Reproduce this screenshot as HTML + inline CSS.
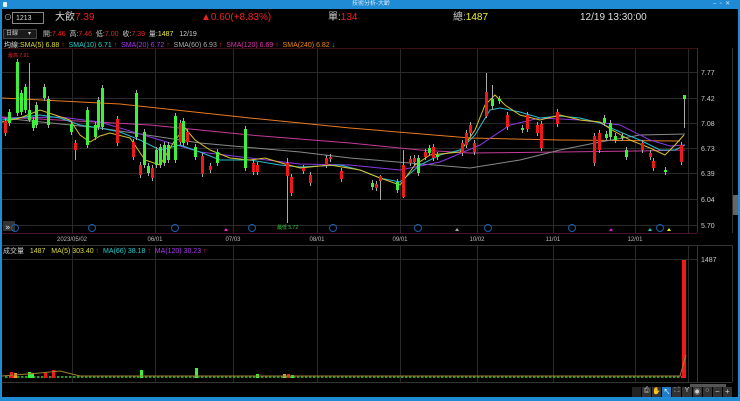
<!DOCTYPE html>
<html><head><meta charset="utf-8">
<style>
*{margin:0;padding:0;box-sizing:border-box}
body{width:740px;height:401px;background:#000;overflow:hidden;position:relative;font-family:"Liberation Sans","Noto Sans CJK TC",sans-serif;color:#ddd}
.t{position:absolute;white-space:nowrap;line-height:1}
</style></head><body>
<div style="position:absolute;left:0;top:0;width:740px;height:9px;background:#1f8bd4"></div>
<div class="t" style="left:352px;top:1px;font-size:6px;color:#cfe6f7">技術分析-大齡</div>
<div style="position:absolute;left:3px;top:2px;width:4px;height:5px;background:#e8f2fa;border-radius:1px"></div>
<div class="t" style="left:713px;top:1px;font-size:6px;color:#cfe6f7">–&nbsp;&nbsp;▫&nbsp;&nbsp;✕</div>
<div style="position:absolute;left:0;top:9px;width:2px;height:392px;background:#1f8bd4"></div>
<div style="position:absolute;left:0;top:397px;width:740px;height:4px;background:#1f8bd4"></div>
<div style="position:absolute;left:738px;top:9px;width:2px;height:392px;background:#1f8bd4"></div>

<div class="t" style="left:4px;top:14px;font-size:8px;color:#bbb">⊙</div>
<div style="position:absolute;left:12px;top:12px;width:32px;height:12px;border:1px solid #888"></div>
<div class="t" style="left:16px;top:15px;font-size:7px;color:#ddd">1213</div>
<div class="t" style="left:55px;top:13px;font-size:10px;color:#ddd">大飲</div>
<div class="t" style="left:75px;top:13px;font-size:10px;color:#e22">7.39</div>
<div class="t" style="left:201px;top:13px;font-size:10px;color:#e22">▲0.60(+8.83%)</div>
<div class="t" style="left:328px;top:13px;font-size:10px;color:#ccc">單:<span style="color:#e22">134</span></div>
<div class="t" style="left:453px;top:13px;font-size:10px;color:#ccc">總:<span style="color:#ee3">1487</span></div>
<div class="t" style="left:580px;top:13px;font-size:10px;color:#ddd">12/19 13:30:00</div>

<div style="position:absolute;left:3px;top:29px;width:34px;height:10px;background:#1a1a1a;border:1px solid #444"></div>
<div class="t" style="left:6px;top:31px;font-size:6px;color:#ccc">日線&nbsp;&nbsp;&nbsp;&nbsp;&nbsp;&nbsp;▾</div>
<div class="t" style="left:43px;top:31px;font-size:7px;color:#ccc">開:<span style="color:#e22">7.46</span>&nbsp; 高:<span style="color:#e22">7.46</span>&nbsp; 低:<span style="color:#e22">7.00</span>&nbsp; 收:<span style="color:#e22">7.39</span>&nbsp; 量:<span style="color:#ee3">1487</span>&nbsp;&nbsp; 12/19</div>
<div class="t" style="left:4px;top:42px;font-size:7px;color:#ddd">均線:<span style="color:#dd3">SMA(5) 6.88</span> <span style="color:#e22">↑</span>&nbsp; <span style="color:#2cc">SMA(10) 6.71</span> <span style="color:#e22">↑</span>&nbsp; <span style="color:#a3e">SMA(20) 6.72</span> <span style="color:#e22">↑</span>&nbsp; <span style="color:#aaa">SMA(60) 6.93</span> <span style="color:#e22">↑</span>&nbsp; <span style="color:#d3a">SMA(120) 6.69</span> <span style="color:#e22">↑</span>&nbsp; <span style="color:#e80">SMA(240) 6.82</span> <span style="color:#2c2">↓</span></div>
<div class="t" style="left:8px;top:54px;font-size:5px;color:#e22">最高 7.91</div>

<svg id="s" width="740" height="401" style="position:absolute;left:0;top:0" xmlns="http://www.w3.org/2000/svg">
<g stroke="#2a2a2a" stroke-width="1" id="grid"></g>
<line x1="2" y1="48.5" x2="697" y2="48.5" stroke="#3a1010"/>
<line x1="2" y1="233.5" x2="697" y2="233.5" stroke="#4a1030"/>
<line x1="697.5" y1="48" x2="697.5" y2="233" stroke="#333"/>
<line x1="732.5" y1="48" x2="732.5" y2="233" stroke="#333"/>
<line x1="2" y1="245.5" x2="732" y2="245.5" stroke="#333"/>
<line x1="697.5" y1="245" x2="697.5" y2="382" stroke="#333"/>
<line x1="732.5" y1="245" x2="732.5" y2="382" stroke="#333"/>
<line x1="2" y1="382.5" x2="732" y2="382.5" stroke="#333"/>
<g id="ma" fill="none" stroke-width="1">
<polyline stroke="#e87a20" points="2,98 120,104 250,118 350,128 470,138 560,140 680,141"/>
<polyline stroke="#c43a9a" points="2,117 150,125 250,135 350,143 420,150 470,153 560,152 640,151 685,150"/>
<polyline stroke="#888" points="2,118 100,128 200,143 300,152 350,158 470,168 520,160 560,150 600,142 640,135 685,134"/>
<polyline stroke="#8a3ae0" points="2,118 60,117 100,122 160,140 200,152 250,158 300,164 350,165 400,170 440,162 480,145 510,125 540,118 580,120 620,125 650,140 670,146 685,145"/>
<polyline stroke="#2abcd0" points="2,120 40,115 60,118 80,125 100,128 120,132 140,140 160,150 180,145 200,152 220,160 250,160 280,165 300,167 340,165 360,170 380,178 400,182 420,165 440,155 460,150 475,135 490,110 500,108 520,112 540,118 560,116 580,118 600,123 620,132 640,140 660,150 675,150 685,145"/>
<polyline stroke="#d8c030" points="2,122 20,118 40,110 55,115 70,120 80,135 90,142 100,136 110,133 130,138 145,160 160,165 175,140 185,128 195,140 210,150 230,158 250,160 265,158 285,164 300,168 330,165 360,170 380,178 400,185 415,165 430,155 460,152 475,130 485,105 495,95 505,105 520,115 540,120 560,115 580,120 600,122 612,130 630,140 650,148 665,155 675,145 684,135"/>
</g>
<g id="cs"></g>
<g id="vol"></g>
<g font-family="Liberation Sans,sans-serif" font-size="7" fill="#ccc">
<text x="701" y="75">7.77</text><text x="701" y="101">7.42</text><text x="701" y="126">7.08</text>
<text x="701" y="151">6.73</text><text x="701" y="176">6.39</text><text x="701" y="202">6.04</text><text x="701" y="228">5.70</text>
<text x="701" y="262">1487</text>
<g font-size="6" fill="#bbb" text-anchor="middle">
<text x="72" y="241">2023/05/02</text><text x="155" y="241">06/01</text><text x="233" y="241">07/03</text><text x="317" y="241">08/01</text>
<text x="400" y="241">09/01</text><text x="477" y="241">10/02</text><text x="553" y="241">11/01</text><text x="635" y="241">12/01</text></g>
<text x="277" y="229" font-size="5" fill="#3c3">最低 5.72</text>
</g>
<rect x="733" y="195" width="5" height="20" fill="#666"/>
<rect x="3" y="221" width="12" height="10" fill="#333"/>
<text x="5" y="230" font-size="9" fill="#ddd" font-family="DejaVu Sans">»</text>
<g id="mk"></g>
<rect x="690" y="384" width="36" height="3" fill="#555"/>
</svg>
<div class="t" style="left:3px;top:248px;font-size:7px;color:#ccc">成交量&nbsp;&nbsp; <span style="color:#dd3">1487&nbsp;&nbsp; MA(5) 303.40</span> <span style="color:#e22">↑</span>&nbsp; <span style="color:#2cc">MA(66) 38.18</span> <span style="color:#e22">↑</span>&nbsp; <span style="color:#a3e">MA(120) 30.23</span> <span style="color:#e22">↑</span></div>
<div style="position:absolute;left:632px;top:387px;width:100px;height:10px;display:flex;gap:1px">
<div style="width:10px;background:#222"></div><div style="width:10px;background:#333;color:#ccc;font-size:7px;text-align:center">⎙</div><div style="width:10px;background:#333;color:#ccc;font-size:7px;text-align:center">✋</div><div style="width:10px;background:#1e7cc8;color:#fff;font-size:7px;text-align:center">↖</div><div style="width:10px;background:#333;color:#ccc;font-size:7px;text-align:center">⛶</div><div style="width:10px;background:#333;color:#ccc;font-size:7px;text-align:center">Y</div><div style="width:10px;background:#333;color:#ccc;font-size:7px;text-align:center">◉</div><div style="width:10px;background:#333;color:#ccc;font-size:7px;text-align:center">○</div><div style="width:10px;background:#333;color:#ccc;font-size:8px;text-align:center;line-height:9px">−</div><div style="width:10px;background:#333;color:#ccc;font-size:8px;text-align:center;line-height:9px">+</div>
</div>
<script>
var NS="http://www.w3.org/2000/svg";
function el(p,t,a){var e=document.createElementNS(NS,t);for(var k in a)e.setAttribute(k,a[k]);document.getElementById(p).appendChild(e);return e;}
[72,155,233,317,400,477,553,635,688].forEach(function(x){el("grid","line",{x1:x+.5,y1:49,x2:x+.5,y2:233});el("grid","line",{x1:x+.5,y1:246,x2:x+.5,y2:382});});
[72,98,123,148,173,199,225].forEach(function(y){el("grid","line",{x1:2,y1:y+.5,x2:697,y2:y+.5});});
el("grid","line",{x1:2,y1:259.5,x2:697,y2:259.5});
var G="#3cf03c",R="#ee1a1a";
var c=[[5,121,133,R],[9,112,123,G],[17,62,113,G],[21,93,112,G],[25,87,110,G],[29,110,120,G,63,122],[33,120,128,G],[36,105,125,G],[44,87,98,G],[48,99,125,G],[71,124,132,G],[75,143,150,R,140,160],[87,110,145,G],[95,125,137,G],[98,100,127,G],[102,88,127,G],[117,119,143,R],[133,142,157,R],[136,93,137,G],[140,165,175,R],[144,132,165,G],[148,166,173,G],[152,168,178,R],[156,150,165,G],[160,147,165,G],[164,145,163,G],[168,145,160,G],[175,116,160,G],[180,123,142,R],[183,121,143,G],[187,132,142,R],[195,147,157,G],[202,156,174,R],[210,166,170,R],[217,152,163,G],[245,129,168,G],[253,163,172,R],[257,165,172,R],[287,163,176,R,158,223],[291,177,193,R],[303,168,171,R],[310,175,183,R],[326,158,165,R],[330,157,159,R],[341,171,179,R],[372,183,187,G],[376,184,188,R],[380,176,181,R,175,200],[397,182,190,G],[403,165,197,R,150,198],[410,159,163,R],[414,158,162,R],[418,158,173,G],[425,152,157,R],[429,148,153,G],[433,147,158,R],[437,155,157,G],[462,143,153,R],[466,133,145,R],[470,125,133,R],[474,143,152,R],[486,92,116,R,73,118],[492,99,106,G,85,110],[499,99,101,G],[507,115,127,R],[522,128,130,G],[527,115,129,R],[537,125,133,R],[541,124,148,R],[557,112,124,R],[594,136,163,R],[599,133,150,R],[604,118,123,G],[606,134,138,G],[610,123,137,G],[615,136,140,G],[622,136,138,G],[626,150,157,G],[642,143,150,R],[650,153,157,R],[653,161,168,R],[665,170,172,G],[681,145,162,R],[684,95,99,G,95,128]];
c.forEach(function(d){var wt=d[4]||d[1]-3,wb=d[5]||d[2]+3;el("cs","line",{x1:d[0]+.5,y1:wt,x2:d[0]+.5,y2:wb,stroke:"#aaa","stroke-width":1});el("cs","rect",{x:d[0]-1,y:d[1],width:3,height:Math.max(2,d[2]-d[1]),fill:d[3]});});
var vc=["#2a9a2a","#9a1a1a","#8a6a20"];
for(var x=5;x<682;x+=4){var h=1+((x*7)%2);el("vol","rect",{x:x,y:378-h,width:2.5,height:h,fill:vc[Math.floor(x*3)%3]});}
[[10,6,R],[14,5,"#e8a020"],[28,6,G],[31,4,G],[44,5,R],[52,8,R],[140,8,G],[195,10,G],[256,4,G],[283,4,"#e8a020"],[287,4,R],[291,3,G]].forEach(function(v){el("vol","rect",{x:v[0],y:378-v[1],width:3,height:v[1],fill:v[2]});});
el("vol","rect",{x:682,y:260,width:4,height:118,fill:R});
el("vol","polyline",{points:"2,376 40,373 60,371 80,376 300,376 680,376 686,355",fill:"none",stroke:"#a08030","stroke-width":1});
[15,92,175,252,333,418,488,572,660].forEach(function(x){el("mk","circle",{cx:x,cy:228,r:3.5,fill:"none",stroke:"#1a5fb0","stroke-width":1});});
[[226,"#e2c"],[457,"#aaa"],[611,"#c2c"],[650,"#2cc"],[669,"#ee3"]].forEach(function(m){el("mk","polygon",{points:(m[0]-2)+",231 "+(m[0]+2)+",231 "+m[0]+",228",fill:m[1]});});
</script>
</body></html>
